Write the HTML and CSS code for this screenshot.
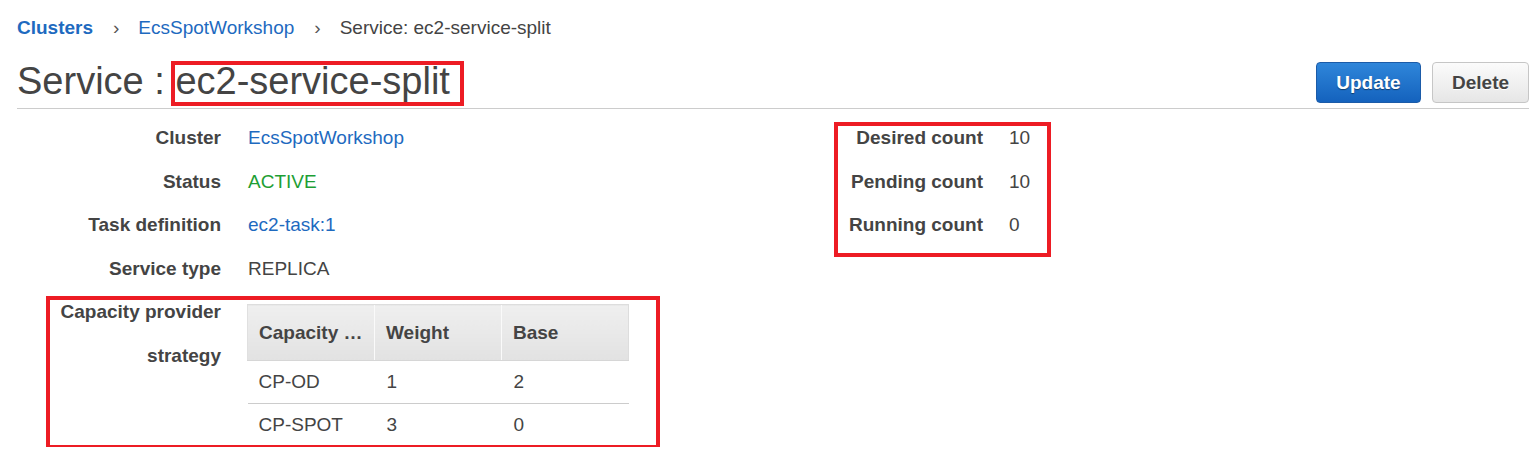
FILE: index.html
```html
<!DOCTYPE html>
<html lang="en">
<head>
<meta charset="utf-8">
<title>Service : ec2-service-split</title>
<link rel="stylesheet" href="styles.css">
</head>
<body>
<div class="page">
  <nav class="crumbs">
    <a class="crumb crumb-root" href="#">Clusters</a>
    <span class="sep">›</span>
    <a class="crumb" href="#">EcsSpotWorkshop</a>
    <span class="sep">›</span>
    <span class="crumb-current">Service: ec2-service-split</span>
  </nav>

  <header class="head">
    <h1 class="title">Service : <span class="mark mark-title">ec2-service-split</span></h1>
    <div class="actions">
      <button class="btn btn-primary" type="button">Update</button>
      <button class="btn btn-default" type="button">Delete</button>
    </div>
  </header>

  <section class="details">
    <dl class="col col-left">
      <dt>Cluster</dt>
      <dd><a class="link" href="#">EcsSpotWorkshop</a></dd>
      <dt>Status</dt>
      <dd class="status-active">ACTIVE</dd>
      <dt>Task definition</dt>
      <dd><a class="link" href="#">ec2-task:1</a></dd>
      <dt>Service type</dt>
      <dd>REPLICA</dd>
      <div class="cps-row mark mark-cps">
        <dt>Capacity provider strategy</dt>
        <dd>
          <table class="cps-table">
            <colgroup><col class="c"><col class="c"><col class="c"></colgroup>
            <thead>
              <tr><th title="Capacity provider">Capacity …</th><th>Weight</th><th>Base</th></tr>
            </thead>
            <tbody>
              <tr><td>CP-OD</td><td>1</td><td>2</td></tr>
              <tr><td>CP-SPOT</td><td>3</td><td>0</td></tr>
            </tbody>
          </table>
        </dd>
      </div>
    </dl>

    <dl class="col col-right mark mark-counts">
      <dt>Desired count</dt>
      <dd>10</dd>
      <dt>Pending count</dt>
      <dd>10</dd>
      <dt>Running count</dt>
      <dd>0</dd>
    </dl>
  </section>
</div>
</body>
</html>
```

FILE: styles.css
```css
*, *::before, *::after { box-sizing: border-box; }

html, body {
  margin: 0;
  padding: 0;
  background: #ffffff;
}

body {
  font-family: "Liberation Sans", Arial, sans-serif;
  font-size: 19px;
  color: #444444;
}

a { text-decoration: none; }

.page {
  padding: 0 7px 0 17px;
}

/* Breadcrumbs */
.crumbs {
  display: flex;
  align-items: center;
  padding-top: 17px;
  line-height: 22px;
  height: 39px;
  white-space: nowrap;
}

.crumb { color: #1e6abf; }
.crumb-root { font-weight: bold; }
.crumb-current { color: #444444; }

.sep {
  margin: 0 19px 0 20px;
  color: #555555;
}

/* Header */
.head {
  display: flex;
  justify-content: space-between;
  align-items: flex-end;
  padding: 20px 0 5px;
  border-bottom: 1px solid #cccccc;
}

.title {
  margin: 0;
  font-size: 38px;
  font-weight: normal;
  line-height: 44px;
  color: #444444;
  white-space: nowrap;
}

.actions {
  display: flex;
  gap: 11px;
}

.btn {
  height: 41px;
  padding: 0 19px;
  font-family: "Liberation Sans", Arial, sans-serif;
  font-size: 19px;
  font-weight: bold;
  border-radius: 4px;
  cursor: pointer;
}

.btn-primary {
  width: 105px;
  color: #ffffff;
  background: linear-gradient(#2f86da, #1462bd);
  border: 1px solid #1b5ba8;
  text-shadow: 0 1px 1px rgba(0, 0, 0, 0.45);
}

.btn-default {
  width: 97px;
  color: #444444;
  background: linear-gradient(#fbfbfb, #e6e6e6);
  border: 1px solid #c6c6c6;
  text-shadow: 0 1px 0 #ffffff;
}

/* Details */
.details {
  display: flex;
  padding-top: 7px;
}

.col {
  margin: 0;
  display: grid;
  grid-template-columns: 204px auto;
  column-gap: 27px;
  line-height: 43.5px;
  align-content: start;
}

.col dt {
  font-weight: bold;
  text-align: right;
}

.col dd { margin: 0; }

.col-left {
  width: 762px;
  flex: none;
}

.col-right {
  column-gap: 26px;
  width: 300px;
}

.link { color: #1e6abf; }
.status-active { color: #1d9e34; }

.cps-row {
  grid-column: 1 / -1;
  display: grid;
  grid-template-columns: 204px auto;
  column-gap: 27px;
}

/* Capacity provider table */
.cps-table {
  margin: 14px 0 0 -1px;
  width: 381px;
  table-layout: fixed;
  border-collapse: collapse;
  line-height: 22px;
}

.cps-table col.c { width: 127px; }

.cps-table th {
  height: 56px;
  padding: 1px 11px 0;
  text-align: left;
  font-weight: bold;
  white-space: nowrap;
  background: linear-gradient(#efefef, #e2e2e2);
  border-top: 1px solid #dddddd;
  border-bottom: 1px solid #d6d6d6;
  border-left: 1px solid #fafafa;
}

.cps-table th:first-child { border-left: 1px solid #e0e0e0; }
.cps-table th:last-child { border-right: 1px solid #dddddd; }

.cps-table td {
  height: 43px;
  padding: 0 11px;
  font-weight: normal;
}

.cps-table td + td { padding-left: 12px; }

.cps-table tbody tr:first-child td {
  border-bottom: 1px solid #cccccc;
}

/* Red annotation boxes (overlays) */
.mark { position: relative; }

.mark::after {
  content: "";
  position: absolute;
  border: 4px solid #ed1c24;
  pointer-events: none;
}

.mark-title::after {
  left: -4px;
  right: -14px;
  top: 1px;
  bottom: -4px;
}

.mark-counts::after {
  left: 55px;
  top: 6px;
  width: 217px;
  height: 135px;
}

.mark-cps::after {
  left: 29px;
  top: 6px;
  width: 614px;
  height: 153px;
}
```
